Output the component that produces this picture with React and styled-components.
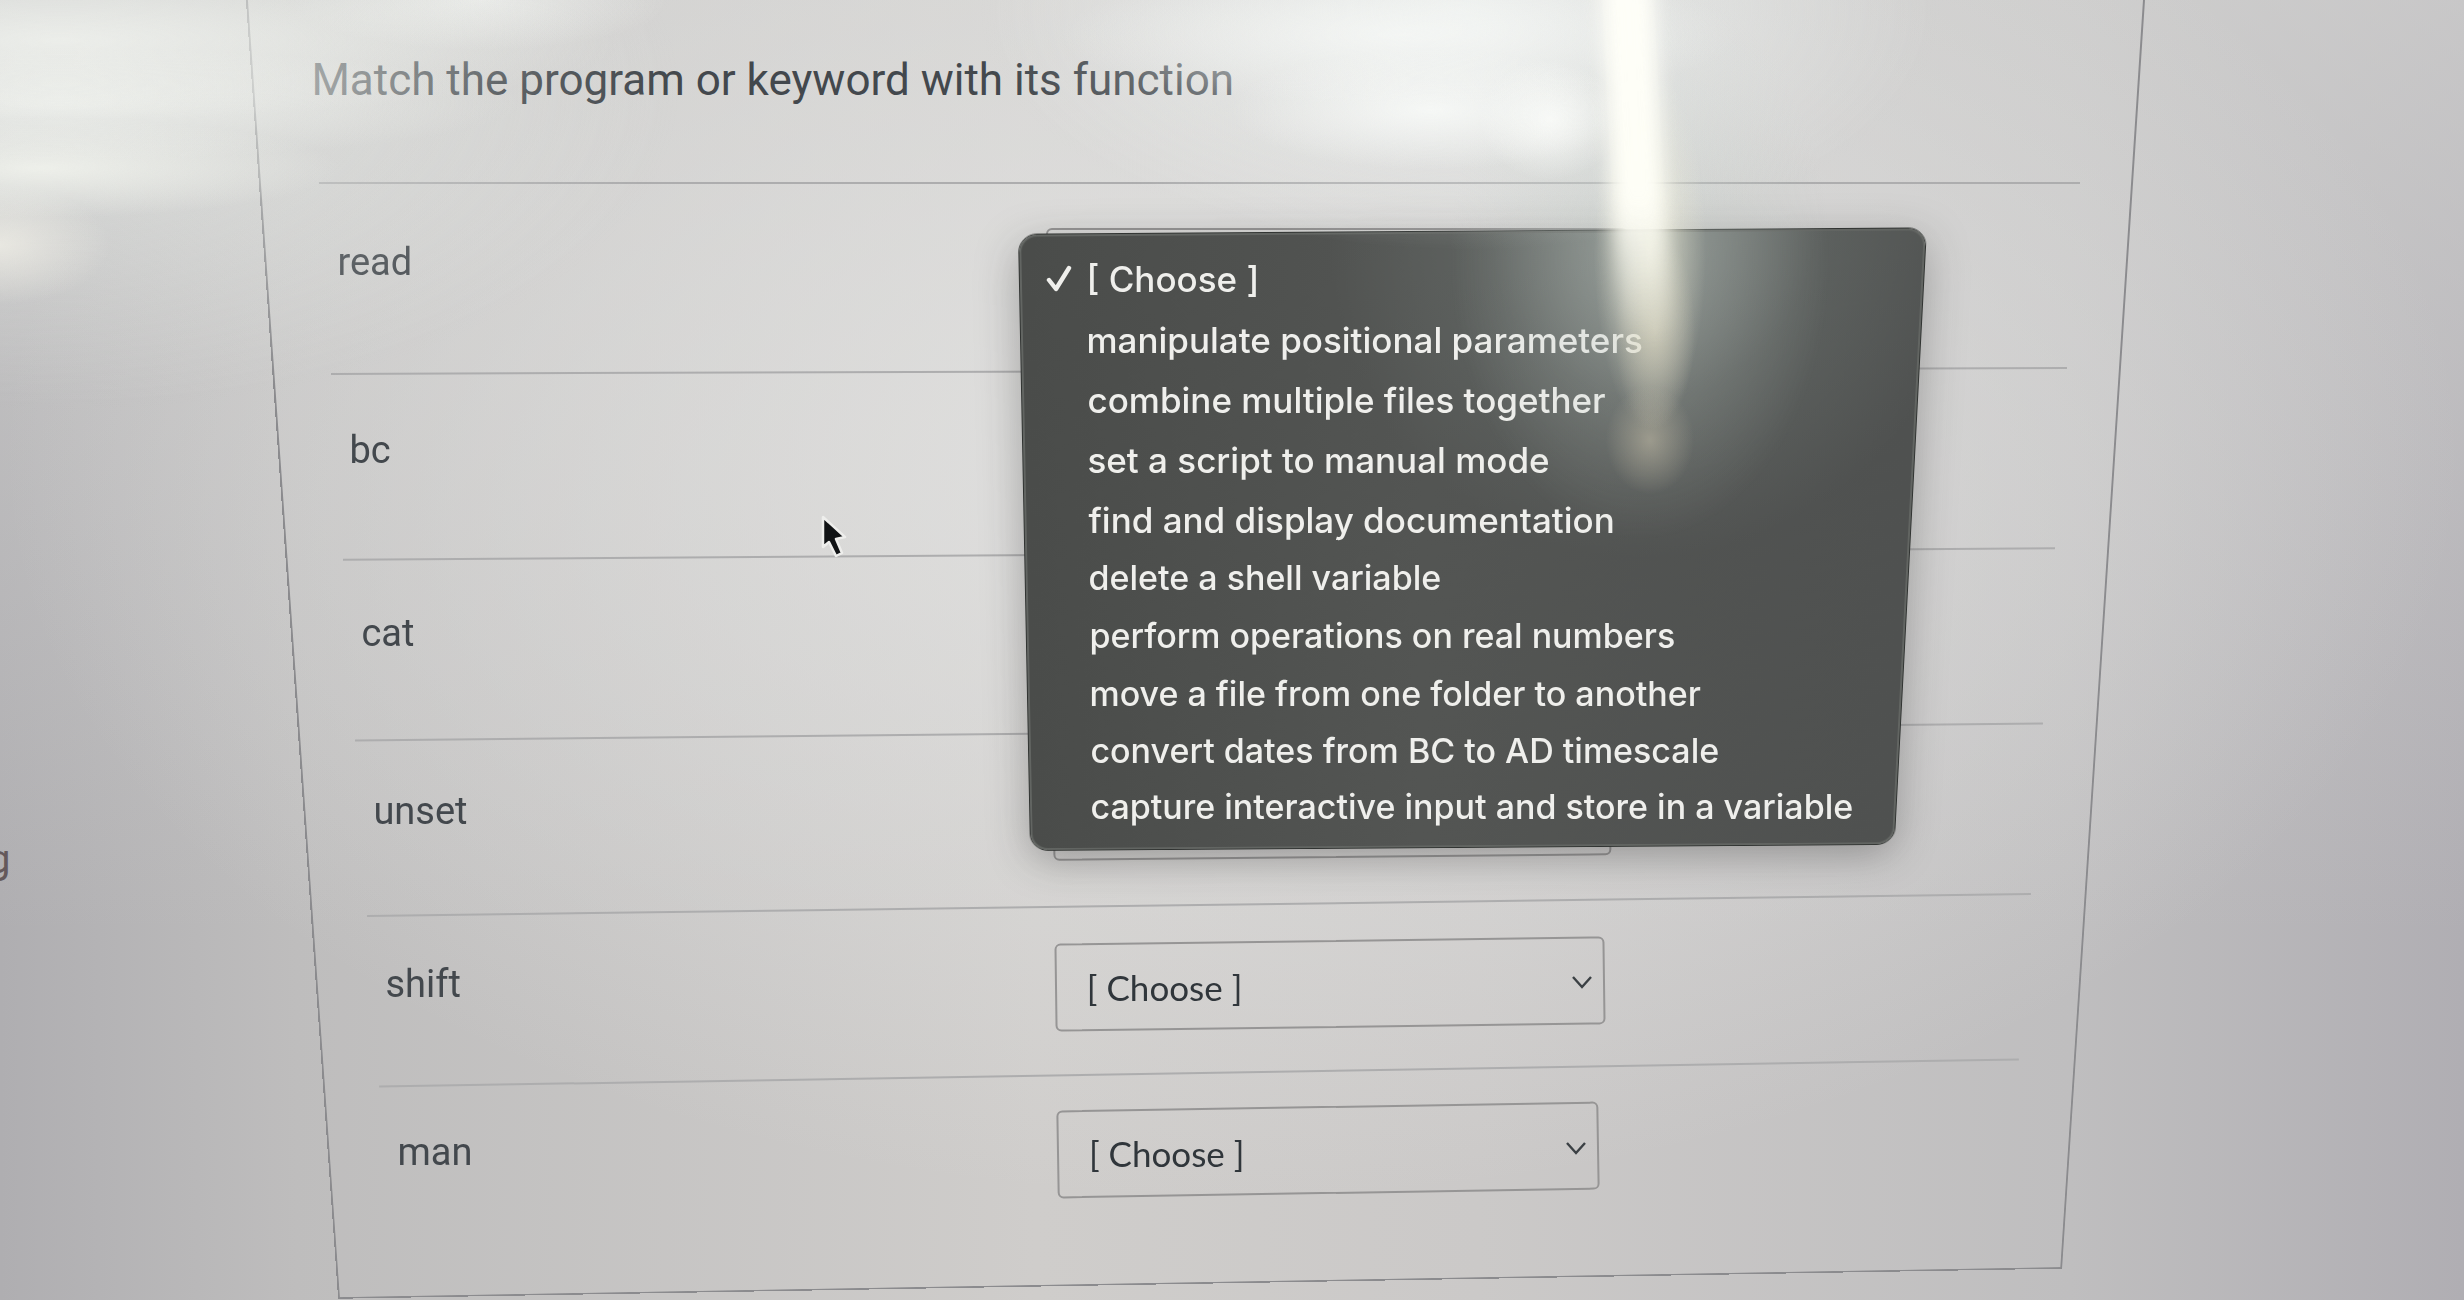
import { useState } from 'react'
import styled, { createGlobalStyle } from 'styled-components'

const CHOOSE = '[ Choose ]'

const keywords = ['read', 'bc', 'cat', 'unset', 'shift', 'man']

const answers = [
  CHOOSE,
  'manipulate positional parameters',
  'combine multiple files together',
  'set a script to manual mode',
  'find and display documentation',
  'delete a shell variable',
  'perform operations on real numbers',
  'move a file from one folder to another',
  'convert dates from BC to AD timescale',
  'capture interactive input and store in a variable'
]

const GlobalStyle = createGlobalStyle`
* {
  box-sizing: border-box;
}
body {
  margin: 0;
  background: #c6c5c6;
  color: #43484d;
  font-family: Roboto, "Liberation Sans", sans-serif;
}
`
const Page = styled.div`
position: relative;
display: grid;
grid-template-columns: 10fr 77fr 13fr;
min-height: 100vh;
overflow: hidden;
background:
  radial-gradient(ellipse 50% 56% at 50% 34%, rgba(226, 226, 225, .9), rgba(226, 226, 225, 0)),
  linear-gradient(180deg, rgba(216, 216, 214, .6), rgba(190, 188, 188, 0) 70%),
  linear-gradient(90deg, #afaeb1 0, #bebdbd 12%, #cfcdcb 42%, #cbc9c8 60%, #bfbebf 84%, #b0aeb3 100%);
`
const Sidebar = styled.aside`
overflow: hidden;
padding-top: 836px;
color: #64595b;
font-size: 40px;
line-height: 48px;
`
const Clipped = styled.span`
display: block;
margin-left: -12px;
`
const Card = styled.main`
position: relative;
padding: 52px 64px 100px 73px;
/* outline of the question card, tilted away from the viewer */
&::before {
  content: '';
  position: absolute;
  inset: -30px -5px auto -1px;
  height: 1506px;
  border: 2px solid #8b8b8e;
  border-top: 0;
  transform: skewY(-1deg) perspective(4000px) rotateX(-16deg);
  transform-origin: 52% 0;
  pointer-events: none;
}
`
const Title = styled.h1`
margin: 0 0 74px -8px;
font-size: 44px;
font-weight: 400;
line-height: 56px;
`
const List = styled.div`
position: relative;
z-index: 0;
display: flex;
flex-direction: column;
`
const Row = styled.div`
position: relative;
display: grid;
grid-template-columns: 190fr 152fr 118fr;
align-items: center;
min-height: ${p => 188 - p.$depth * 5}px;
margin: 0 ${p => p.$depth * 12}px;
padding-bottom: 8px;
&::before {
  content: '';
  position: absolute;
  inset: 0 0 auto;
  border-top: 2px solid #adadae;
  transform: rotate(${p => p.$depth * -0.19}deg);
}
`
const Keyword = styled.label`
align-self: start;
padding: 58px 0 0 18px;
font-size: 38px;
line-height: 44px;
`
const Field = styled.div`
position: relative;
&::before {
  content: '';
  position: absolute;
  inset: 0;
  border: 2px solid #969595;
  border-radius: 6px;
  transform: rotate(${p => p.$depth * -0.19}deg);
  pointer-events: none;
}
`
const Select = styled.select`
display: block;
width: 100%;
height: 88px;
padding: 6px 60px 0 32px;
appearance: none;
border: 0;
background: transparent;
color: #30363b;
font: 400 35px/44px Lato, "Liberation Sans", sans-serif;
`
const Arrow = styled.svg`
position: absolute;
top: 35px;
right: 12px;
width: 22px;
height: 14px;
pointer-events: none;
`
const Menu = styled.ul`
position: absolute;
z-index: 1;
top: 4px;
left: -27px;
width: 907px;
margin: 0;
padding: 16px 0 8px;
list-style: none;
&::before {
  content: '';
  position: absolute;
  z-index: -1;
  inset: 1px 0 0;
  height: 106.5%;
  border: 2px solid #626562;
  border-radius: 18px;
  outline: 1px solid #303331;
  background:
    radial-gradient(ellipse 36% 52% at 70% 0, #7d8380, rgba(106, 112, 109, .5) 50%, rgba(90, 94, 92, 0)),
    linear-gradient(90deg, #4a4c4a, #535553 45%, #4f5150);
  box-shadow: 0 12px 44px rgba(40, 40, 40, .35);
  transform: skewY(-.4deg) perspective(2000px) rotateX(-9deg);
  transform-origin: 27% 0;
}
`
const Option = styled.li`
display: flex;
align-items: center;
height: ${p => 61 - Math.floor(p.$depth * 0.6)}px;
padding-left: ${p => 27 + Math.floor(p.$depth / 2)}px;
color: #efefec;
font: 500 ${p => p.$depth < 5 ? 35 : 34}px/44px Inter, "Liberation Sans", sans-serif;
white-space: nowrap;
cursor: default;
`
const Mark = styled.span`
flex: none;
display: flex;
width: 40px;
`
const Pointer = styled.svg`
position: absolute;
z-index: 2;
top: 514px;
left: 819px;
width: 30px;
height: 46px;
pointer-events: none;
`
const Glare = styled.div`
position: absolute;
z-index: 3;
inset: 0;
pointer-events: none;
background:
  radial-gradient(ellipse 560px 80px at 60px 40px, rgba(248, 250, 245, .6), transparent),
  radial-gradient(ellipse 460px 56px at 60px 104px, rgba(248, 250, 245, .55), transparent),
  radial-gradient(ellipse 300px 50px at 40px 168px, rgba(248, 250, 243, .7), transparent),
  radial-gradient(ellipse 110px 60px at 0 245px, rgba(250, 248, 238, .6), transparent),
  radial-gradient(ellipse 620px 320px at 60px 90px, rgba(236, 240, 236, .55), transparent),
  radial-gradient(ellipse 190px 50px at 480px 0, rgba(246, 248, 245, .6), transparent),
  radial-gradient(ellipse 340px 70px at 1400px 35px, rgba(250, 252, 250, .65), transparent),
  radial-gradient(ellipse 200px 60px at 1430px 110px, rgba(250, 252, 250, .8), transparent),
  radial-gradient(ellipse 70px 60px at 1550px 120px, rgba(252, 253, 250, .8), transparent),
  radial-gradient(ellipse 480px 240px at 1460px 10px, rgba(242, 246, 244, .7), transparent),
  radial-gradient(ellipse 56px 180px at 1650px 250px, rgba(240, 237, 214, .7), transparent),
  radial-gradient(ellipse 40px 100px at 1655px 330px, rgba(220, 213, 190, .55), transparent),
  radial-gradient(ellipse 44px 54px at 1650px 440px, rgba(190, 184, 164, .6), transparent),
  radial-gradient(ellipse 190px 280px at 1640px 260px, rgba(190, 200, 194, .45), transparent);
&::before {
  content: '';
  position: absolute;
  top: -30px;
  left: 1610px;
  width: 52px;
  height: 370px;
  background: linear-gradient(180deg, #fefef8 0, #fefef6 62%, rgba(240, 237, 214, 0));
  filter: blur(9px);
  transform: rotate(-3deg);
}
`

const Chevron = () =>
  <Arrow viewBox='0 0 22 14' aria-hidden='true'>
    <path d='M2 2 L11 12 L20 2' fill='none' stroke='#3b4044' strokeWidth='2.4' />
  </Arrow>

const Check = () =>
  <svg width='26' height='28' viewBox='0 0 26 28' aria-hidden='true'>
    <path d='M3 15 L10 24 L23 3' fill='none' stroke='#efefec' strokeWidth='4.4' strokeLinecap='round' strokeLinejoin='round' />
  </svg>

const AnswerMenu = ({ value, onPick }) =>
  <Menu role='listbox' aria-label='Answers'>
    {answers.map((answer, i) =>
      <Option
        key={answer}
        $depth={i}
        role='option'
        aria-selected={answer === value}
        onClick={() => onPick(answer)}
      >
        <Mark>{answer === value && <Check />}</Mark>
        {answer}
      </Option>
    )}
  </Menu>

const App = () => {
  const [values, setValues] = useState({})
  const [open, setOpen] = useState('read')

  const pick = (keyword, value) => {
    setValues({ ...values, [keyword]: value })
    setOpen(null)
  }

  return (
    <Page>
      <GlobalStyle />
      <Sidebar>
        <Clipped>g</Clipped>
      </Sidebar>
      <Card>
        <Title>Match the program or keyword with its function</Title>
        <List>
          {keywords.map((keyword, i) =>
            <Row key={keyword} $depth={i} style={{ zIndex: keywords.length - i }}>
              <Keyword htmlFor={keyword}>{keyword}</Keyword>
              <Field $depth={i}>
                <Select
                  id={keyword}
                  value={values[keyword] || CHOOSE}
                  onChange={e => pick(keyword, e.target.value)}
                >
                  {answers.map(answer => <option key={answer}>{answer}</option>)}
                </Select>
                <Chevron />
                {open === keyword &&
                  <AnswerMenu
                    value={values[keyword] || CHOOSE}
                    onPick={value => pick(keyword, value)}
                  />}
              </Field>
            </Row>
          )}
        </List>
      </Card>
      <Pointer viewBox='0 0 30 46' aria-hidden='true'>
        <path
          d='M4 3 L4 33 L10 28 L17 42 L23 39 L17 25 L26 23 Z'
          fill='#111315' stroke='#eeeeec' strokeWidth='2.5' strokeLinejoin='round'
        />
      </Pointer>
      <Glare />
    </Page>
  )
}

export default App
